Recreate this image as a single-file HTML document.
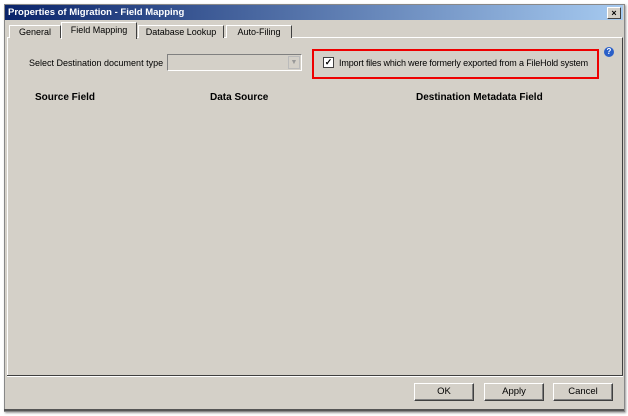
<html><head><style>
body{margin:0;width:628px;height:416px;background:#fff;position:relative;font-family:"Liberation Sans",sans-serif;font-size:9px;color:#000;overflow:hidden}
.a{position:absolute;white-space:nowrap}
.dlg{left:4px;top:4px;width:619px;height:406px;background:#d4d0c8;border:1px solid #888;box-shadow:1px 1px 2px #999}
.title{left:5px;top:5px;width:618px;height:15px;background:linear-gradient(90deg,#0a246a,#a6caf0);color:#fff;font-weight:bold;font-size:9.5px;line-height:15px;padding-left:3px;box-sizing:border-box}
.x{left:607px;top:7px;width:12px;height:10px;background:#d4d0c8;border:1px solid #fff;border-right-color:#404040;border-bottom-color:#404040;font-size:9px;line-height:10px;text-align:center;color:#000;font-weight:bold}
.tab{top:23px;height:14px;border:1px solid #fff;border-right:1px solid #404040;border-bottom:none;text-align:center;line-height:14px;background:#d4d0c8}
.panel{left:7px;top:37px;width:614px;height:338px;border:1px solid #fff;border-right-color:#404040;border-bottom:none}
.btn{top:383px;width:58px;height:16px;border:1px solid #fff;border-right:1px solid #404040;border-bottom:1px solid #404040;box-shadow:inset -1px -1px #808080;text-align:center;line-height:16px;font-size:9.5px}
.h{top:92px;font-weight:bold;font-size:10px}
</style></head><body>
<div class="a dlg"></div>
<div class="a title">Properties of Migration - Field Mapping</div>
<div class="a x">×</div>
<div class="a panel"></div>
<div class="a tab" style="left:9px;width:50px;top:25px;height:12px;line-height:12px">General</div>
<div class="a tab" style="left:61px;width:74px;top:22px;height:16px;border-bottom:none;z-index:2">Field Mapping</div>
<div class="a tab" style="left:138px;width:84px;top:25px;height:12px;line-height:12px">Database Lookup</div>
<div class="a tab" style="left:226px;width:64px;top:25px;height:12px;line-height:12px">Auto-Filing</div>
<div class="a" style="left:29px;top:58px;font-size:9px">Select Destination document type</div>
<div class="a" style="left:167px;top:54px;width:133px;height:15px;border:1px solid #808080;border-right-color:#fff;border-bottom-color:#fff;background:#d4d0c8"></div>
<div class="a" style="left:288px;top:56px;width:10px;height:11px;border:1px solid #bbb;color:#999;font-size:7px;text-align:center;line-height:11px">▼</div>
<div class="a" style="left:312px;top:49px;width:283px;height:26px;border:2px solid #e00"></div>
<div class="a" style="left:323px;top:57px;width:9px;height:9px;border:1px solid #404040;background:#fff;font-size:9px;line-height:9px;text-align:center;font-weight:bold">✓</div>
<div class="a" style="left:339px;top:58px;font-size:9px;letter-spacing:-0.15px">Import files which were formerly exported from a FileHold system</div>
<div class="a" style="left:604px;top:47px;width:10px;height:10px;border-radius:50%;background:#2a5fc8;color:#fff;font-size:8px;line-height:10px;text-align:center;font-weight:bold">?</div>
<div class="a h" style="left:35px">Source Field</div>
<div class="a h" style="left:210px">Data Source</div>
<div class="a h" style="left:416px">Destination Metadata Field</div>
<div class="a" style="left:7px;top:375px;width:616px;height:1px;background:#404040"></div>
<div class="a" style="left:7px;top:376px;width:616px;height:1px;background:#fff"></div>
<div class="a btn" style="left:414px">OK</div>
<div class="a btn" style="left:484px">Apply</div>
<div class="a btn" style="left:553px">Cancel</div>
<div class="a" style="left:4px;top:409px;width:620px;height:2px;background:#555"></div>
</body></html>
